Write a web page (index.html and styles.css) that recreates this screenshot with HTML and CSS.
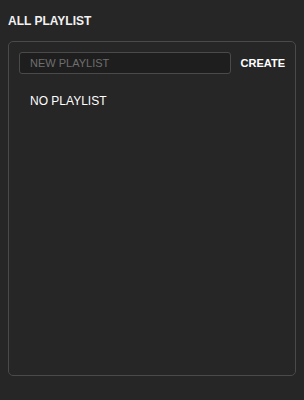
FILE: index.html
```html
<!DOCTYPE html>
<html lang="en">
<head>
  <meta charset="UTF-8">
  <title>All Playlist</title>
  <link rel="stylesheet" href="styles.css">
</head>
<body>
  <h1 class="title">ALL PLAYLIST</h1>
  <div class="panel">
    <div class="create-row">
      <input type="text" class="new-input" placeholder="NEW PLAYLIST">
      <button class="create-btn">CREATE</button>
    </div>
    <div class="empty">NO PLAYLIST</div>
  </div>
</body>
</html>
```

FILE: styles.css
```css
body {
  margin: 0;
  padding: 0 8px;
  background: #262626;
  color: #fff;
  font-family: 'Liberation Sans', Arial, sans-serif;
}

.title {
  margin: 0;
  padding-top: 14px;
  font-size: 12px;
  font-weight: bold;
  line-height: 14px;
  color: #f2f2f2;
}

.panel {
  box-sizing: border-box;
  margin-top: 13px;
  height: 335px;
  border: 1px solid #4a4a4a;
  border-radius: 5px;
  padding: 10px 10px;
}

.create-row {
  display: flex;
  align-items: center;
  gap: 10px;
}

.new-input {
  width: 190px;
  height: 20px;
  padding: 0 10px;
  margin: 0;
  border: 1px solid #4a4a4a;
  border-radius: 3px;
  background: #1e1e1e;
  color: #fff;
  font-family: inherit;
  font-size: 11px;
}

.new-input::placeholder {
  color: #6e6e6e;
}

.create-btn {
  background: none;
  border: none;
  padding: 0;
  color: #fff;
  font-family: inherit;
  font-size: 11px;
  font-weight: bold;
  cursor: pointer;
}

.empty {
  margin-top: 20px;
  padding-left: 11px;
  font-size: 12px;
}
```
